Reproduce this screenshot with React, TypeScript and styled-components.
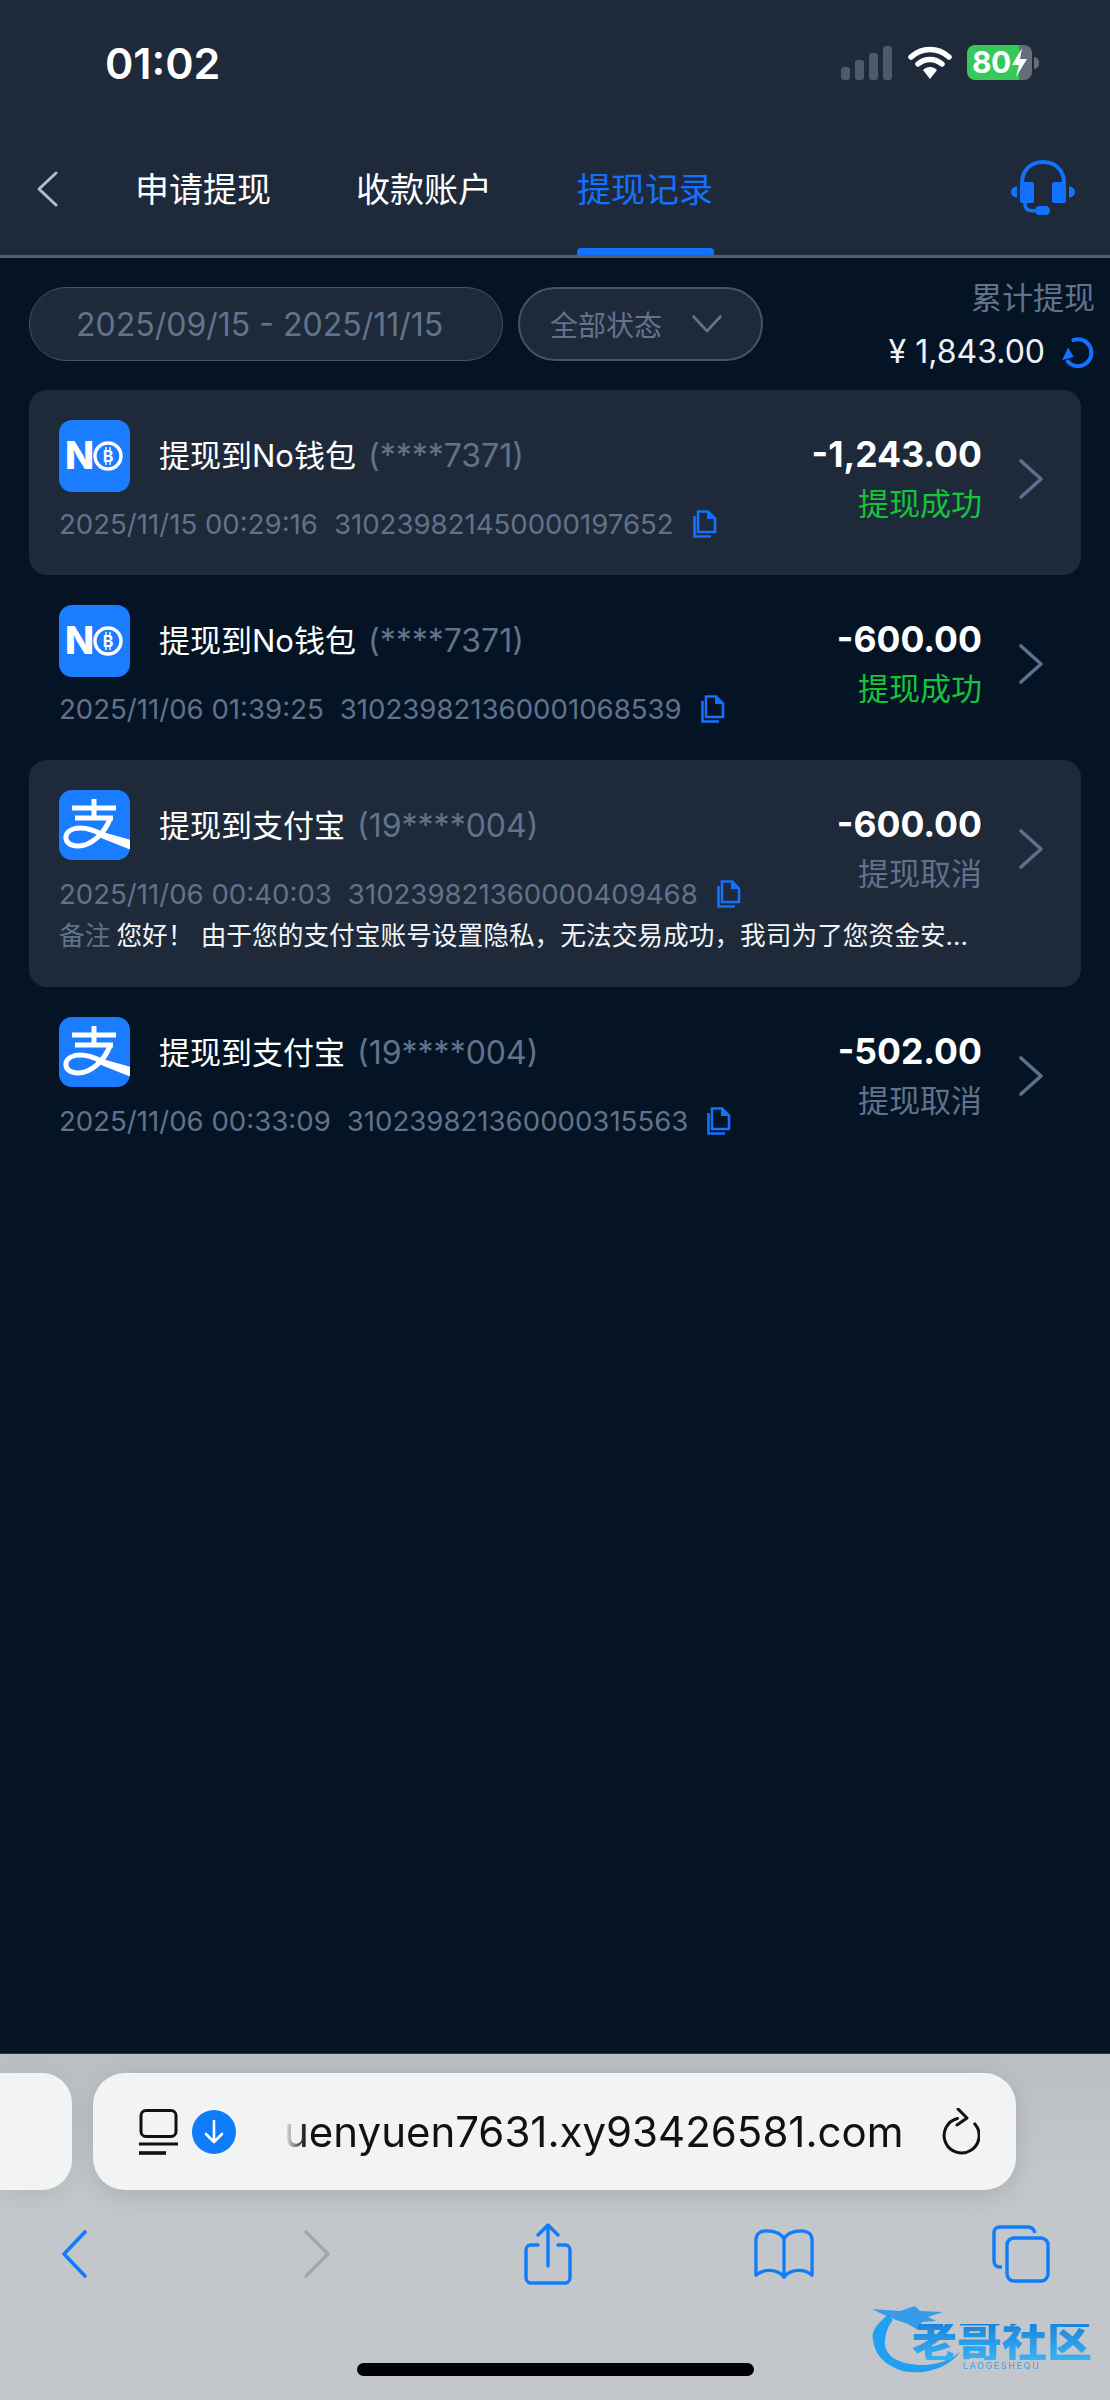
import React from "react";
import styled, { createGlobalStyle } from "styled-components";

const Global = createGlobalStyle`
  html, body {
    margin: 0;
    padding: 0;
    background: #041425;
  }
  * {
    box-sizing: border-box;
  }
  body {
    font-family: "Inter", "Noto Sans CJK SC", sans-serif;
  }
`;

const Page = styled.div`
  width: 1110px;
  height: 2400px;
  display: flex;
  flex-direction: column;
  position: relative;
  overflow: hidden;
  background: #041425;
`;

const Header = styled.header`
  height: 258px;
  flex: none;
  background: #1e2a3a;
  border-bottom: 3px solid #565e6b;
`;

const StatusBar = styled.div`
  height: 124px;
  padding: 45px 78px 0 105px;
  display: flex;
  align-items: flex-start;
  color: #fff;
`;

const Clock = styled.div`
  font-size: 43px;
  font-weight: 600;
  line-height: 36px;
  flex: 1;
`;

const StatusIcons = styled.div`
  display: flex;
  align-items: center;
  gap: 16px;
`;

const Battery = styled.div`
  width: 65px;
  height: 35px;
  border-radius: 8px;
  display: flex;
  align-items: center;
  padding-left: 5px;
  font-size: 30px;
  line-height: 35px;
  font-weight: 700;
  letter-spacing: -0.5px;
  color: #fff;
  position: relative;
  background: linear-gradient(to right, #37c85a 0 80%, #676d78 80% 100%);
`;

const BatteryBolt = styled.svg`
  position: absolute;
  right: 4px;
  top: 3px;
`;

const BatteryWrap = styled.div`
  display: flex;
  align-items: center;
  gap: 2px;
  margin-right: -7px;
  margin-left: -1px;
`;

const BatteryNub = styled.div`
  width: 5px;
  height: 12px;
  border-radius: 0 6px 6px 0;
  background: #676d78;
`;

const Nav = styled.nav`
  height: 131px;
  padding: 0 35px 0 36px;
  display: flex;
  align-items: stretch;
`;

const BackButton = styled.div`
  width: 99px;
  display: flex;
  align-items: center;
  padding-bottom: 2px;
`;

const Tabs = styled.div`
  display: flex;
  gap: 85px;
  flex: 1;
`;

const Tab = styled.div<{ $active?: boolean }>`
  position: relative;
  display: flex;
  align-items: center;
  padding-bottom: 5px;
  font-size: 34px;
  color: ${(p) => (p.$active ? "#1272ff" : "#fff")};

  &::after {
    content: "";
    display: ${(p) => (p.$active ? "block" : "none")};
    position: absolute;
    left: 0;
    right: -1px;
    bottom: 0;
    height: 7px;
    border-radius: 4px 4px 0 0;
    background: #1272ff;
  }
`;

const SupportButton = styled.div`
  display: flex;
  align-items: center;
  padding-bottom: 4px;
`;

const Main = styled.main`
  flex: 1;
  min-height: 0;
`;

const FilterRow = styled.div`
  height: 132px;
  padding: 22px 15px 0 29px;
  display: flex;
  align-items: flex-start;
`;

const Pill = styled.div`
  margin-top: 7px;
  height: 74px;
  border-radius: 37px;
  background: #1e2a3a;
  border: 2px solid #465163;
  display: flex;
  align-items: center;
  color: #63738c;
`;

const DatePill = styled(Pill)`
  width: 474px;
  padding-left: 46px;
  font-size: 32px;
  border-width: 1.5px;
`;

const StatusPill = styled(Pill)`
  width: 245px;
  margin-left: 15px;
  padding-left: 30px;
  font-size: 28px;
  gap: 30px;
`;

const Summary = styled.div`
  margin-left: auto;
  display: flex;
  flex-direction: column;
  align-items: flex-end;
`;

const SummaryLabel = styled.div`
  font-size: 31px;
  line-height: 36px;
  color: #62728b;
`;

const SummaryValue = styled.div`
  margin-top: 18px;
  display: flex;
  align-items: center;
  gap: 17px;
  font-size: 32px;
  line-height: 36px;
  color: #eef1f5;
`;

const List = styled.div`
  padding: 0 29px;
  display: flex;
  flex-direction: column;
`;

const Row = styled.div<{ $card?: boolean }>`
  padding: 30px 38px 30px 30px;
  border-radius: 18px;
  background: ${(p) => (p.$card ? "#1e2a3a" : "transparent")};
`;

const RowTop = styled.div`
  height: 125px;
  display: flex;
  align-items: flex-start;
`;

const RowMain = styled.div`
  flex: 1;
  min-width: 0;
`;

const TitleLine = styled.div`
  height: 72px;
  display: flex;
  align-items: center;
  gap: 29px;
`;

const Tile = styled.svg`
  flex: none;
  display: block;
`;

const Title = styled.div`
  font-size: 31px;
  color: #fff;
  padding-bottom: 6px;
  white-space: nowrap;
`;

const Masked = styled.span`
  margin-left: 12px;
  font-size: 32px;
  color: #62728b;
`;

const MetaLine = styled.div`
  margin-top: 15px;
  height: 34px;
  display: flex;
  align-items: center;
  font-size: 27.6px;
  color: #62728b;
  white-space: nowrap;
`;

const SerialNo = styled.span`
  margin-left: 16px;
`;

const CopyIcon = styled.svg`
  margin-left: 19px;
  flex: none;
`;

const RowRight = styled.div`
  flex: none;
  height: 118px;
  display: flex;
  align-items: center;
  gap: 37px;
`;

const Amounts = styled.div`
  display: flex;
  flex-direction: column;
  align-items: flex-end;
`;

const Amount = styled.div`
  font-size: 35.5px;
  font-weight: 700;
  line-height: 40px;
  color: #fff;
`;

const StatusText = styled.div<{ $ok?: boolean }>`
  margin-top: 9px;
  font-size: 31px;
  line-height: 40px;
  color: ${(p) => (p.$ok ? "#16c43c" : "#62728b")};
`;

const Note = styled.div`
  height: 42px;
  line-height: 42px;
  font-size: 25.7px;
  color: #f3f5f8;
  white-space: nowrap;
`;

const NoteLabel = styled.span`
  color: #62728b;
  margin-right: 6px;
`;

const Toolbar = styled.footer`
  height: 347px;
  flex: none;
  background: linear-gradient(#babdc2, #c3c6cb 35%);
  border-top: 1px solid #2c3644;
  padding-top: 19px;
  display: flex;
  flex-direction: column;
`;

const TabStrip = styled.div`
  display: flex;
  gap: 21px;
`;

const SideTab = styled.div`
  width: 72px;
  height: 117px;
  border-radius: 0 30px 30px 0;
  background: #f2f4f3;
  box-shadow: 0 6px 24px rgba(0, 0, 0, 0.08);
`;

const UrlBar = styled.div`
  width: 923px;
  height: 117px;
  border-radius: 32px;
  background: #f2f4f3;
  box-shadow: 0 6px 24px rgba(0, 0, 0, 0.12);
  display: flex;
  align-items: center;
  padding: 0 36px 0 46px;
`;

const DownloadBadge = styled.svg`
  margin-left: 14px;
  flex: none;
`;

const UrlText = styled.div`
  flex: 1;
  margin-left: 48px;
  font-size: 42px;
  color: #111;
  white-space: nowrap;
  -webkit-mask-image: linear-gradient(to right, transparent 0, #000 22px);
  mask-image: linear-gradient(to right, transparent 0, #000 22px);
`;

const Actions = styled.div`
  margin-top: 33px;
  padding: 0 59px 0 44px;
  display: flex;
  justify-content: space-between;
  align-items: center;
`;

const Action = styled.div`
  width: 60px;
  height: 62px;
  display: flex;
  align-items: center;
  justify-content: center;
`;

const ForwardAction = styled(Action)`
  padding-left: 12px;
`;

const HomeBar = styled.div`
  width: 397px;
  height: 13px;
  margin: 78px auto 0;
  border-radius: 7px;
  background: #000;
`;

const Watermark = styled.div`
  position: absolute;
  left: 870px;
  top: 2298px;
  width: 228px;
  height: 80px;
  filter: blur(0.5px);
`;

const WatermarkName = styled.div`
  position: absolute;
  left: 42px;
  top: 26px;
  font-size: 45px;
  line-height: 36px;
  font-weight: 900;
  white-space: nowrap;
  color: transparent;
  background: linear-gradient(#1a84dd, #38b2f6);
  -webkit-background-clip: text;
  background-clip: text;
`;

const WatermarkSub = styled.div`
  position: absolute;
  left: 93px;
  top: 62px;
  font-size: 9px;
  line-height: 11px;
  letter-spacing: 1.6px;
  white-space: nowrap;
  color: #3c9fe6;
`;

const NoLogo = () => (
  <Tile width="71" height="72" viewBox="0 0 71 72">
    <rect width="71" height="72" rx="13" fill="#1a7cff" />
    <text x="6" y="49" fontFamily="Inter" fontSize="38" fontWeight="800" fill="#fff">
      N
    </text>
    <circle cx="49" cy="36" r="13" fill="none" stroke="#fff" strokeWidth="3.4" />
    <text x="49" y="42" textAnchor="middle" fontFamily="Inter" fontSize="16" fontWeight="700" fill="#fff">
      B
    </text>
    <path d="M47 27V30M51 27V30M47 42V45M51 42V45" stroke="#fff" strokeWidth="1.4" />
  </Tile>
);

const AlipayLogo = () => (
  <Tile width="71" height="72" viewBox="0 0 71 72">
    <defs>
      <clipPath id="alipay-clip">
        <rect width="71" height="70" rx="13" />
      </clipPath>
    </defs>
    <g clipPath="url(#alipay-clip)">
      <rect width="71" height="70" fill="#1a7cff" />
      <path d="M13 18H57M35 9V28M16 28H54" fill="none" stroke="#fff" strokeWidth="5" />
      <path
        d="M51 29C45 44 32 56 19 56C10 56 6 51 7 46C8 41 14 38 22 38C31 38 38 42 47 46"
        fill="none"
        stroke="#fff"
        strokeWidth="5"
      />
      <path d="M40 41L72 50V60L37 46Z" fill="#fff" />
    </g>
  </Tile>
);

const Copy = () => (
  <CopyIcon width="24" height="28" viewBox="0 0 24 28">
    <path d="M5 1.5H15L22 8.5V22H5Z" fill="none" stroke="#1272ff" strokeWidth="2.6" />
    <path d="M14 1.5V9H22Z" fill="#1272ff" />
    <path d="M1.5 6V26.5H18" fill="none" stroke="#1272ff" strokeWidth="2.6" />
  </CopyIcon>
);

const RightChevron = () => (
  <svg width="24" height="40" viewBox="0 0 24 40">
    <path d="M2 2L22 20L2 38" fill="none" stroke="#5d6f8a" strokeWidth="3.6" strokeLinecap="round" strokeLinejoin="round" />
  </svg>
);

interface Withdrawal {
  logo: "no" | "alipay";
  title: string;
  account: string;
  time: string;
  serial: string;
  amount: string;
  status: string;
  ok: boolean;
  card: boolean;
  note?: string;
}

const withdrawals: Withdrawal[] = [
  {
    logo: "no",
    title: "提现到No钱包",
    account: "(****7371)",
    time: "2025/11/15 00:29:16",
    serial: "310239821450000197652",
    amount: "-1,243.00",
    status: "提现成功",
    ok: true,
    card: true,
  },
  {
    logo: "no",
    title: "提现到No钱包",
    account: "(****7371)",
    time: "2025/11/06 01:39:25",
    serial: "310239821360001068539",
    amount: "-600.00",
    status: "提现成功",
    ok: true,
    card: false,
  },
  {
    logo: "alipay",
    title: "提现到支付宝",
    account: "(19****004)",
    time: "2025/11/06 00:40:03",
    serial: "310239821360000409468",
    amount: "-600.00",
    status: "提现取消",
    ok: false,
    card: true,
    note: "您好！ 由于您的支付宝账号设置隐私，无法交易成功，我司为了您资金安...",
  },
  {
    logo: "alipay",
    title: "提现到支付宝",
    account: "(19****004)",
    time: "2025/11/06 00:33:09",
    serial: "310239821360000315563",
    amount: "-502.00",
    status: "提现取消",
    ok: false,
    card: false,
  },
];

export default function App() {
  return (
    <Page>
      <Global />
      <Header>
        <StatusBar>
          <Clock>01:02</Clock>
          <StatusIcons>
            <svg width="51" height="34" viewBox="0 0 51 34">
              <rect x="0" y="21" width="9" height="13" rx="3" fill="#4f5a68" />
              <rect x="14" y="14" width="9" height="20" rx="3" fill="#4f5a68" />
              <rect x="28" y="7" width="9" height="27" rx="3" fill="#4f5a68" />
              <rect x="42" y="0" width="9" height="34" rx="3" fill="#4f5a68" />
            </svg>
            <svg width="44" height="34" viewBox="0 0 44 34">
              <path d="M3 11C14 1 30 1 41 11" fill="none" stroke="#fff" strokeWidth="5.5" strokeLinecap="round" />
              <path d="M10 18C17 12 27 12 34 18" fill="none" stroke="#fff" strokeWidth="5.5" strokeLinecap="round" />
              <path d="M15 24C19 20 25 20 29 24L22 33Z" fill="#fff" />
            </svg>
            <BatteryWrap>
              <Battery>
                80
                <BatteryBolt width="17" height="29" viewBox="0 0 17 29">
                  <path d="M11 0L1 17H8L5 29L16 11H9Z" fill="#fff" />
                </BatteryBolt>
              </Battery>
              <BatteryNub />
            </BatteryWrap>
          </StatusIcons>
        </StatusBar>
        <Nav>
          <BackButton>
            <svg width="22" height="36" viewBox="0 0 22 36">
              <path d="M20 2L3 18L20 34" fill="none" stroke="#a9c0da" strokeWidth="3" strokeLinecap="round" strokeLinejoin="round" />
            </svg>
          </BackButton>
          <Tabs>
            <Tab>申请提现</Tab>
            <Tab>收款账户</Tab>
            <Tab $active>提现记录</Tab>
          </Tabs>
          <SupportButton>
            <svg width="64" height="55" viewBox="0 0 64 55">
              <path d="M11 28V23C11 10 20 2 32 2C44 2 53 10 53 23V28" fill="none" stroke="#1272ff" strokeWidth="4" />
              <rect x="9" y="22" width="14" height="21" rx="2.5" fill="#1272ff" />
              <rect x="41" y="22" width="14" height="21" rx="2.5" fill="#1272ff" />
              <path d="M6 26V38C2 37 0 35 0 32C0 29 2 27 6 26Z" fill="#1272ff" />
              <path d="M58 26V38C62 37 64 35 64 32C64 29 62 27 58 26Z" fill="#1272ff" />
              <path d="M14 43V45C14 49 17 51 24 51" fill="none" stroke="#1272ff" strokeWidth="3.4" />
              <rect x="24" y="46" width="15" height="9" rx="4.5" fill="#1272ff" />
            </svg>
          </SupportButton>
        </Nav>
      </Header>

      <Main>
        <FilterRow>
          <DatePill>2025/09/15 - 2025/11/15</DatePill>
          <StatusPill>
            全部状态
            <svg width="30" height="18" viewBox="0 0 30 18">
              <path d="M1.5 1.5L15 16L28.5 1.5" fill="none" stroke="#63738c" strokeWidth="2.6" strokeLinecap="round" strokeLinejoin="round" />
            </svg>
          </StatusPill>
          <Summary>
            <SummaryLabel>累计提现</SummaryLabel>
            <SummaryValue>
              ¥ 1,843.00
              <svg width="33" height="33" viewBox="0 0 33 33">
                <path d="M13 3.5A13.5 13.5 0 1 1 4.5 24" fill="none" stroke="#1272ff" strokeWidth="4" strokeLinecap="round" transform="rotate(-8 16 16)" />
                <path d="M0 15L11 13L10 25Z" fill="#1272ff" transform="rotate(70 6 20) translate(-2 2)" />
              </svg>
            </SummaryValue>
          </Summary>
        </FilterRow>

        <List>
          {withdrawals.map((w) => (
            <Row key={w.serial} $card={w.card}>
              <RowTop>
                <RowMain>
                  <TitleLine>
                    {w.logo === "no" ? <NoLogo /> : <AlipayLogo />}
                    <Title>
                      {w.title}
                      <Masked>{w.account}</Masked>
                    </Title>
                  </TitleLine>
                  <MetaLine>
                    {w.time}
                    <SerialNo>{w.serial}</SerialNo>
                    <Copy />
                  </MetaLine>
                </RowMain>
                <RowRight>
                  <Amounts>
                    <Amount>{w.amount}</Amount>
                    <StatusText $ok={w.ok}>{w.status}</StatusText>
                  </Amounts>
                  <RightChevron />
                </RowRight>
              </RowTop>
              {w.note && (
                <Note>
                  <NoteLabel>备注</NoteLabel>
                  {w.note}
                </Note>
              )}
            </Row>
          ))}
        </List>
      </Main>

      <Toolbar>
        <TabStrip>
          <SideTab />
          <UrlBar>
            <svg width="39" height="46" viewBox="0 0 39 46">
              <rect x="2" y="1.5" width="35" height="26" rx="5" fill="none" stroke="#111" strokeWidth="3" />
              <path d="M0 35H39" stroke="#111" strokeWidth="3" />
              <path d="M0 44H27" stroke="#111" strokeWidth="3.6" />
            </svg>
            <DownloadBadge width="44" height="44" viewBox="0 0 44 44">
              <circle cx="22" cy="22" r="22" fill="#0f7dfa" />
              <path d="M22 11V31M14 24L22 32L30 24" fill="none" stroke="#fff" strokeWidth="2.6" strokeLinecap="round" strokeLinejoin="round" />
            </DownloadBadge>
            <UrlText>uenyuen7631.xy93426581.com</UrlText>
            <svg width="39" height="47" viewBox="0 0 39 47">
              <path d="M14 11A17.5 17.5 0 1 0 32 14" fill="none" stroke="#111" strokeWidth="3" strokeLinecap="round" transform="rotate(8 19 28)" />
              <path d="M17 1L26 10L16 17" fill="none" stroke="#111" strokeWidth="3" strokeLinecap="round" strokeLinejoin="round" />
            </svg>
          </UrlBar>
        </TabStrip>
        <Actions>
          <Action>
            <svg width="26" height="48" viewBox="0 0 26 48">
              <path d="M24 2L3 24L24 46" fill="none" stroke="#0f7dfa" strokeWidth="3.6" strokeLinecap="round" strokeLinejoin="round" />
            </svg>
          </Action>
          <ForwardAction>
            <svg width="28" height="48" viewBox="0 0 28 48">
              <path d="M3 2L25 24L3 46" fill="none" stroke="#a4a8ae" strokeWidth="3.6" strokeLinecap="round" strokeLinejoin="round" />
            </svg>
          </ForwardAction>
          <Action>
            <svg width="48" height="62" viewBox="0 0 48 62">
              <path d="M14 22H7C4 22 2 24 2 27V54C2 57 4 60 7 60H41C44 60 46 57 46 54V27C46 24 44 22 41 22H34" fill="none" stroke="#0f7dfa" strokeWidth="3.4" strokeLinecap="round" />
              <path d="M24 43V2M14 12L24 2L34 12" fill="none" stroke="#0f7dfa" strokeWidth="3.4" strokeLinecap="round" strokeLinejoin="round" />
            </svg>
          </Action>
          <Action>
            <svg width="62" height="52" viewBox="0 0 62 52">
              <path d="M31 10C27 3 20 2 13 2C7 2 2 5 2 11V48C10 41 24 41 31 50C38 41 52 41 60 48V11C60 5 55 2 49 2C42 2 35 3 31 10ZM31 10V50" fill="none" stroke="#0f7dfa" strokeWidth="3.4" strokeLinejoin="round" />
            </svg>
          </Action>
          <Action>
            <svg width="58" height="58" viewBox="0 0 58 58">
              <path d="M10 42H8C4 42 2 40 2 36V8C2 4 4 2 8 2H36C40 2 42 4 43 8" fill="none" stroke="#0f7dfa" strokeWidth="3.4" />
              <rect x="15" y="13" width="41" height="43" rx="7" fill="none" stroke="#0f7dfa" strokeWidth="3.4" />
            </svg>
          </Action>
        </Actions>
        <HomeBar />
      </Toolbar>

      <Watermark>
        <svg width="228" height="80" viewBox="0 0 228 80">
          <path d="M18 17C6 26 1 34 3 42C5 56 13 64 23 69C32 74 42 75 53 74C68 72 82 65 90 54C80 62 67 67 53 67C42 67 32 65 23 60C17 55 14 49 15 42C16 34 18 28 23 22Z" fill="#21a0f2" />
          <path d="M2 11L30 13L45 8L50 13L73 14L58 19L66 23L52 24L48 32L38 26L26 22L10 15Z" fill="#1d93ee" opacity="0.85" />
        </svg>
        <WatermarkName>老哥社区</WatermarkName>
        <WatermarkSub>LAOGESHEQU</WatermarkSub>
      </Watermark>
    </Page>
  );
}
